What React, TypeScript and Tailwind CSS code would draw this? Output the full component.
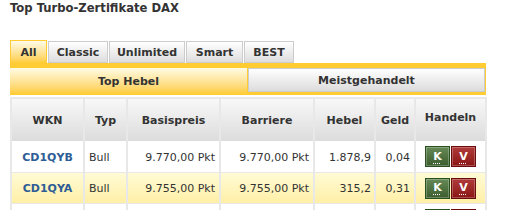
import React from "react";

const rows = [
  { wkn: "CD1QYB", typ: "Bull", basis: "9.770,00 Pkt", barriere: "9.770,00 Pkt", hebel: "1.878,9", geld: "0,04", hl: false },
  { wkn: "CD1QYA", typ: "Bull", basis: "9.755,00 Pkt", barriere: "9.755,00 Pkt", hebel: "315,2", geld: "0,31", hl: true },
  { wkn: "", typ: "", basis: "", barriere: "", hebel: "", geld: "", hl: false },
];

function TradeButtons() {
  return (
    <div className="flex justify-center gap-[1px]">
      <a className="flex h-[21px] w-[25px] items-center justify-center border border-[#2b5020] bg-gradient-to-b from-[#668a57] to-[#3c5d2e] text-[11px] font-bold text-white shadow-[inset_0_0_0_1px_rgba(255,255,255,0.25)]">
        <span className="leading-[12px] underline decoration-dotted underline-offset-[3px]">K</span>
      </a>
      <a className="flex h-[21px] w-[25px] items-center justify-center border border-[#6a0c0c] bg-gradient-to-b from-[#b03a3a] to-[#8a1414] text-[11px] font-bold text-white shadow-[inset_0_0_0_1px_rgba(255,255,255,0.25)]">
        <span className="leading-[12px] underline decoration-dotted underline-offset-[3px]">V</span>
      </a>
    </div>
  );
}

export default function App() {
  const tabs = [
    { label: "All", w: "w-[37px]", active: true },
    { label: "Classic", w: "w-[60px]", active: false },
    { label: "Unlimited", w: "w-[76px]", active: false },
    { label: "Smart", w: "w-[57px]", active: false },
    { label: "BEST", w: "w-[50px]", active: false },
  ];
  const th = "border-x-2 border-[#e8e8e8] bg-gradient-to-b from-[#f8f8f8] to-[#dcdcdc] font-bold text-[#333] text-center p-0 pt-[3px]";
  const td = "border-x-2 border-b border-[#e8e8e8] p-0";
  return (
    <div className="h-[210px] w-[521px] overflow-hidden bg-white pl-[10px] text-[11px] text-[#333]" style={{ fontFamily: '"DejaVu Sans", Verdana, sans-serif' }}>
      <div className="pt-[2px] text-[11.6px] font-bold leading-[13px] text-[#333]">Top Turbo-Zertifikate DAX</div>
      <div className="mt-[25px] flex items-end gap-[1px]">
        {tabs.map((t) =>
          t.active ? (
            <div key={t.label} className={`${t.w} flex h-[23px] items-center justify-center border border-b-0 border-[#ffcc33] bg-gradient-to-b from-[#fffbe6] to-[#ffcc33] font-bold leading-none`}>
              {t.label}
            </div>
          ) : (
            <div key={t.label} className={`${t.w} flex h-[22px] items-center justify-center border border-[#cccccc] bg-gradient-to-b from-[#ffffff] to-[#dddddd] font-bold leading-none`}>
              {t.label}
            </div>
          )
        )}
      </div>
      <div className="flex h-[32px] w-[476px] items-start gap-[1px] bg-[#ffcc33] pt-[5px] pr-[1px]">
        <div className="flex h-[26px] w-[237px] items-center justify-center bg-gradient-to-b from-[#fffbe3] to-[#ffcc33] font-bold leading-none">
          Top Hebel
        </div>
        <div className="flex h-[24px] w-[237px] items-center justify-center border border-[#cccccc] bg-gradient-to-b from-[#ffffff] to-[#dcdcdc] font-bold leading-none">
          Meistgehandelt
        </div>
      </div>
      <table className="mt-[2px] w-[475px] table-fixed border-collapse border-t-2 border-[#e8e8e8] text-[11px]">
        <colgroup>
          <col className="w-[73px]" />
          <col className="w-[43px]" />
          <col className="w-[93px]" />
          <col className="w-[94px]" />
          <col className="w-[61px]" />
          <col className="w-[40px]" />
          <col className="w-[71px]" />
        </colgroup>
        <thead>
          <tr className="h-[43px]">
            <th className={th}>WKN</th>
            <th className={th}>Typ</th>
            <th className={th}>Basispreis</th>
            <th className={th}>Barriere</th>
            <th className={th}>Hebel</th>
            <th className={th}>Geld</th>
            <th className={`${th} !pt-0 !pb-[3px]`}>Handeln</th>
          </tr>
        </thead>
        <tbody>
          {rows.map((r, i) => (
            <tr key={i} className={`h-[31px] ${r.hl ? "bg-gradient-to-b from-[#fffbd6] to-[#ffefa6]" : "bg-white"}`}>
              <td className={`${td} pt-[3px] text-center font-bold text-[#2e5d96]`}>{r.wkn}</td>
              <td className={`${td} pt-[3px] pl-[4px] text-[#333]`}>{r.typ}</td>
              <td className={`${td} pt-[3px] pr-[4px] text-right text-[#333]`}>{r.basis}</td>
              <td className={`${td} pt-[3px] pr-[4px] text-right text-[#333]`}>{r.barriere}</td>
              <td className={`${td} pt-[3px] pr-[3px] text-right text-[#333]`}>{r.hebel}</td>
              <td className={`${td} pt-[3px] pr-[4px] text-right text-[#333]`}>{r.geld}</td>
              <td className={`${td} pt-[1px]`}>
                <TradeButtons />
              </td>
            </tr>
          ))}
        </tbody>
      </table>
    </div>
  );
}
